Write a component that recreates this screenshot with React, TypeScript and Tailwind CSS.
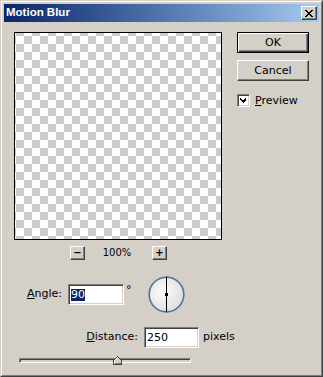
import React from 'react';

const face = "font-['DejaVu_Sans',sans-serif] text-[10.5px] text-black";
const sunken =
  'border border-t-[#808080] border-l-[#808080] border-b-white border-r-white shadow-[inset_1px_1px_#404040,inset_-1px_-1px_#d4d0c8]';

const Btn: React.FC<{ label: string; primary?: boolean }> = ({ label, primary }) => (
  <div
    className={`w-[72px] h-[21px] flex items-center justify-center bg-[#d4d0c8] ${
      primary
        ? 'border border-black shadow-[inset_1px_1px_#fff,inset_-1px_-1px_#404040,inset_-2px_-2px_#808080]'
        : 'border border-t-white border-l-white border-r-[#404040] border-b-[#404040] shadow-[inset_-1px_-1px_#808080]'
    }`}
  >
    <span className="font-['DejaVu_Sans',sans-serif] text-[11px] leading-none">{label}</span>
  </div>
);

const SmallBtn: React.FC<{ sign: string }> = ({ sign }) => (
  <div className="w-[15px] h-[14px] flex items-center justify-center bg-[#d4d0c8] border border-t-white border-l-white border-r-[#404040] border-b-[#404040] shadow-[inset_-1px_-1px_#808080]">
    <span className="font-['DejaVu_Sans',sans-serif] text-[10px] leading-none font-bold">{sign}</span>
  </div>
);

export default function App() {
  return (
    <div className="w-[323px] h-[377px] border border-t-[#d4d0c8] border-l-[#d4d0c8] border-r-[#404040] border-b-[#404040] bg-[#d4d0c8]">
      <div className="h-full flex flex-col border border-t-white border-l-white border-r-[#808080] border-b-[#808080] p-[2px]">
        {/* title bar */}
        <div className="h-[18px] flex items-center justify-between bg-gradient-to-r from-[#0a246a] to-[#a6caf0] pl-[2px] pr-[2px]">
          <span className="font-['Liberation_Sans',sans-serif] font-bold text-[11.5px] text-white leading-none">
            Motion Blur
          </span>
          <div className="w-[16px] h-[14px] flex items-center justify-center bg-[#d4d0c8] border border-t-white border-l-white border-r-[#404040] border-b-[#404040] shadow-[inset_-1px_-1px_#808080]">
            <svg width="8" height="7" viewBox="0 0 8 7" shapeRendering="crispEdges">
              <path
                d="M0 0h2v1H0zM6 0h2v1H6zM1 1h2v1H1zM5 1h2v1H5zM2 2h4v1H2zM3 3h2v1H3zM2 4h4v1H2zM1 5h2v1H1zM5 5h2v1H5zM0 6h2v1H0zM6 6h2v1H6z"
                fill="#000"
              />
            </svg>
          </div>
        </div>

        {/* body */}
        <div className={`flex-1 flex flex-col pl-[10px] pt-[10px] ${face}`}>
          <div className="flex">
            <div className="w-[208px] h-[208px] border border-black bg-[conic-gradient(#cccccc_25%,#ffffff_0_50%,#cccccc_0_75%,#ffffff_0)] bg-size-[16px_16px] bg-position-[9px_11px]" />
            <div className="ml-[15px] flex flex-col">
              <Btn label="OK" primary />
              <div className="mt-[7px]">
                <Btn label="Cancel" />
              </div>
              <div className="mt-[13px] flex items-center gap-[5px]">
                <div className={`w-[13px] h-[13px] bg-white flex items-center justify-center ${sunken}`}>
                  <svg width="7" height="7" viewBox="0 0 7 7" shapeRendering="crispEdges">
                    <path d="M6 0v3L3 6 0 3V1l3 3z" fill="#000" />
                  </svg>
                </div>
                <span className="text-[11px] leading-none">
                  <span className="underline">P</span>review
                </span>
              </div>
            </div>
          </div>

          {/* zoom */}
          <div className="mt-[5px] ml-[56px] flex items-center">
            <SmallBtn sign="−" />
            <span className="w-[67px] text-center pr-[3px] text-[10px]">100%</span>
            <SmallBtn sign="+" />
          </div>

          {/* angle */}
          <div className="mt-[16px] flex items-center h-[37px]">
            <span className="w-[54px] text-right pr-[6px] text-[11px]">
              <span className="underline">A</span>ngle:
            </span>
            <div className={`w-[56px] h-[21px] bg-white flex items-center pl-[2px] ${sunken}`}>
              <span className="bg-[#0a246a] text-white text-[11px] leading-[12px]">90</span>
            </div>
            <span className="w-[24px] pl-[2px] self-start mt-[6px] text-[11px]">°</span>
            <svg width="37" height="37" viewBox="0 0 37 37">
              <defs>
                <radialGradient id="dial" cx="0.4" cy="0.4" r="0.7">
                  <stop offset="0" stopColor="#fbfbfb" />
                  <stop offset="1" stopColor="#dcdcdc" />
                </radialGradient>
              </defs>
              <circle cx="18.5" cy="18.5" r="17.3" fill="url(#dial)" stroke="#56709f" strokeWidth="1.6" />
              <line x1="18.5" y1="0.5" x2="18.5" y2="36.5" stroke="#000" strokeWidth="1" />
              <rect x="17" y="17" width="3" height="3" fill="#000" />
            </svg>
          </div>

          {/* distance */}
          <div className="mt-[14px] flex items-center">
            <span className="w-[130px] text-right pr-[6px] text-[11px]">
              <span className="underline">D</span>istance:
            </span>
            <div className={`w-[55px] h-[21px] bg-white flex items-center pl-[2px] ${sunken}`}>
              <span className="text-[11px] leading-none">250</span>
            </div>
            <span className="ml-[4px] text-[11px]">pixels</span>
          </div>

          {/* slider */}
          <div className="mt-[10px] ml-[5px] relative w-[172px] h-[5px] bg-[#d4d0c8] border border-t-[#808080] border-l-[#808080] border-b-white border-r-white shadow-[inset_1px_1px_#404040]">
            <svg className="absolute left-[93px] top-[-3px]" width="9" height="9" viewBox="0 0 9 9" shapeRendering="crispEdges">
              <path d="M4 0h1v1h1v1h1v1h1v1h1v5H0V4h1V3h1V2h1V1h1z" fill="#404040" />
              <path d="M4 1h1v1h1v1h1v1h1v4H1V4h1V3h1V2h1z" fill="#808080" />
              <path d="M4 1h1v1h1v1h1v1h1v3H1V4h1V3h1V2h1z" fill="#d4d0c8" />
              <path d="M4 1h1v1H4zM3 2h1v1H3zM2 3h1v1H2zM1 4h1v4H1z" fill="#fff" />
            </svg>
          </div>
        </div>
      </div>
    </div>
  );
}
